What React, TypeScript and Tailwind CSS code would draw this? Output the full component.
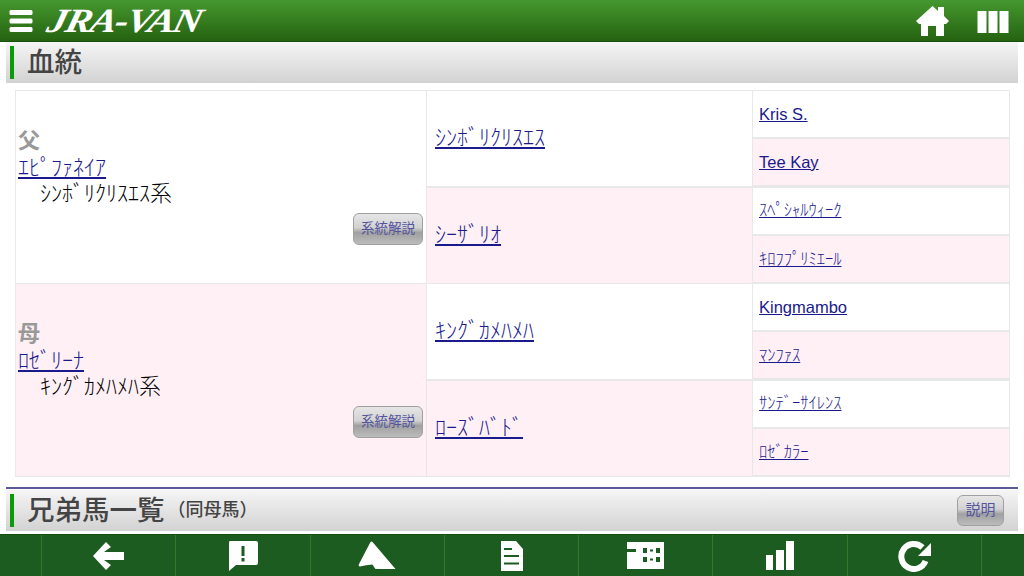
import React from "react";

const pink = "bg-[#fff0f5]";
const jp = "font-['Liberation_Sans','Noto_Sans_CJK_JP',sans-serif]";
const btnBg = "bg-[linear-gradient(#e6e6e6_0%,#d2d2d2_45%,#a0a0a0_62%,#bcbcbc_100%)]";
const footerGreen = "#1d5c20";

const Ancestor = ({ name, kana, bg }: { name: string; kana?: boolean; bg: string }) => (
	<div className={`h-[46px] flex items-center pl-[6px] ${bg}`}>
		<a className={`text-[#1a1a8c] underline text-[16.5px] ${kana ? "font-light" : ""}`}>{name}</a>
	</div>
);

const SystemButton = ({ label }: { label: string }) => (
	<div className={`absolute right-[3px] bottom-[38px] w-[70px] h-[32px] rounded-[6px] border border-[#a0a0a0] ${btnBg} flex items-center justify-center text-[13.5px] text-[#55559f]`}>
		{label}
	</div>
);

const Parent = ({ role, name, line, bg }: { role: string; name: string; line: string; bg: string }) => (
	<div className={`relative row-span-4 ${bg} pl-[2px] pt-[36px]`}>
		<div className="text-[22px] leading-[27px] font-bold text-[#999]">{role}</div>
		<a className="block text-[22px] leading-[27px] font-light text-[#1a1a8c] underline">{name}</a>
		<div className="pl-[22px] text-[22px] leading-[26px] font-light text-black">{line}</div>
		<SystemButton label="系統解説" />
	</div>
);

const Mid = ({ name, bg }: { name: string; bg: string }) => (
	<div className={`row-span-2 flex items-center pl-[8px] pb-[2px] ${bg}`}>
		<a className="text-[22px] font-light text-[#1a1a8c] underline">{name}</a>
	</div>
);

const SectionBar = ({ children }: { children: React.ReactNode }) => (
	<div className="relative h-[41px] mx-[6px] flex items-center bg-[linear-gradient(#f5f5f5,#d2d2d2)]">
		<div className="ml-[4px] w-[4px] h-[33px] bg-[#0a9a0a]" />
		{children}
	</div>
);

const FooterCell = ({ children }: { children: React.ReactNode }) => (
	<div className="w-[134.3px] h-full border-r border-[#2f7a2a] flex items-center justify-center">{children}</div>
);

export default function App() {
	return (
		<div className={`w-[1024px] h-[576px] overflow-hidden bg-white flex flex-col ${jp}`}>
			{/* header */}
			<div className="h-[42px] shrink-0 border-b border-[#14500e] bg-[linear-gradient(#45982f,#256210)] flex items-center">
				<svg width="24" height="24" viewBox="0 0 24 24" className="ml-[9px] mt-[1px]">
					<rect x="0.5" y="1" width="23" height="5" rx="1.5" fill="#fff" />
					<rect x="0.5" y="9.5" width="23" height="5" rx="1.5" fill="#fff" />
					<rect x="0.5" y="18" width="23" height="5" rx="1.5" fill="#fff" />
				</svg>
				<span className="ml-[15px] text-[34px] leading-none font-bold italic text-white font-['Liberation_Serif',serif] tracking-[-1.5px] scale-x-[1.17] skew-x-[-12deg] origin-left">
					JRA-VAN
				</span>
				<div className="ml-auto flex items-center">
					<svg width="33" height="30" viewBox="0 0 33 30" className="mr-[28px] mt-[1px]">
						<path
							fill="#fff"
							d="M16.5 0 L22 5 V1 H28 V10 L33 15 L30 18 H28 V30 H20 V20 H12 V30 H5 V18 H3 L0 15 Z"
						/>
					</svg>
					<svg width="32" height="22" viewBox="0 0 32 22" className="mr-[15px] mt-[3px]">
						<rect x="0.5" y="0" width="9" height="22" fill="#fff" />
						<rect x="11.5" y="0" width="9" height="22" fill="#fff" />
						<rect x="22.5" y="0" width="9" height="22" fill="#fff" />
					</svg>
				</div>
			</div>

			{/* 血統 */}
			<SectionBar>
				<span className="ml-[13px] text-[27.5px] font-medium text-[#444]">血統</span>
			</SectionBar>

			{/* pedigree table */}
			<div className="mt-[7px] ml-[15px] w-[995px] h-[387px] bg-[#e8e8e8] p-px grid grid-cols-[410px_325px_1fr] grid-rows-[repeat(8,47px)] gap-[1px] gap-y-[1.3px]">
				<Parent role="父" name="ｴﾋﾟﾌｧﾈｲｱ" line="ｼﾝﾎﾞﾘｸﾘｽｴｽ系" bg="bg-white" />
				<Mid name="ｼﾝﾎﾞﾘｸﾘｽｴｽ" bg="bg-white" />
				<Ancestor name="Kris S." bg="bg-white" />
				<Ancestor name="Tee Kay" bg={pink} />
				<Mid name="ｼｰｻﾞﾘｵ" bg={pink} />
				<Ancestor name="ｽﾍﾟｼｬﾙｳｨｰｸ" kana bg="bg-white" />
				<Ancestor name="ｷﾛﾌﾌﾟﾘﾐｴｰﾙ" kana bg={pink} />
				<Parent role="母" name="ﾛｾﾞﾘｰﾅ" line="ｷﾝｸﾞｶﾒﾊﾒﾊ系" bg={pink} />
				<Mid name="ｷﾝｸﾞｶﾒﾊﾒﾊ" bg="bg-white" />
				<Ancestor name="Kingmambo" bg="bg-white" />
				<Ancestor name="ﾏﾝﾌｧｽ" kana bg={pink} />
				<Mid name="ﾛｰｽﾞﾊﾞﾄﾞ" bg={pink} />
				<Ancestor name="ｻﾝﾃﾞｰｻｲﾚﾝｽ" kana bg="bg-white" />
				<Ancestor name="ﾛｾﾞｶﾗｰ" kana bg={pink} />
			</div>

			<div className="mt-[10px] mx-[6px] h-[2px] bg-[#5a5a9a]" />
			<div className="mt-px">
				<SectionBar>
					<span className="ml-[13px] text-[27.5px] font-medium text-[#444]">兄弟馬一覧</span>
					<span className="ml-[3px] text-[18px] font-medium text-[#444]">（同母馬）</span>
					<div className={`ml-auto mr-[14px] w-[47px] h-[31px] rounded-[6px] border border-[#a0a0a0] ${btnBg} flex items-center justify-center text-[15px] text-[#55559f]`}>
						説明
					</div>
				</SectionBar>
			</div>

			{/* footer */}
			<div className="mt-[3px] flex-1 border-t border-[#14500e] bg-[#1d5c20] flex">
				<div className="w-[42px] h-full border-r border-[#2f7a2a]" />
				<FooterCell>
					<svg width="32" height="30" viewBox="0 0 32 30">
						<path fill="#fff" d="M13 1 L18 6 L11 11 H31 V19 H11 L18 24 L13 29 L0 15 Z" />
					</svg>
				</FooterCell>
				<FooterCell>
					<svg width="32" height="32" viewBox="0 0 32 32">
						<path fill="#fff" d="M3 1 H29 Q31 1 31 3 V23 Q31 25 29 25 H9 L2 31 V3 Q2 1 3 1 Z" />
						<rect x="14.5" y="6" width="3" height="10" fill={footerGreen} />
						<rect x="14.5" y="18" width="3" height="3.5" fill={footerGreen} />
					</svg>
				</FooterCell>
				<FooterCell>
					<svg width="38" height="29" viewBox="0 0 38 29">
						<path fill="#fff" d="M12.5 1 Q13.5 0 14.5 1 L37.5 28 H17.5 L14.3 23.5 Q8 24 2 25.5 Q0 25.5 1 23 Z" />
					</svg>
				</FooterCell>
				<FooterCell>
					<svg width="24" height="30" viewBox="0 0 24 30">
						<path fill="#fff" d="M1 0 H16 L23 8 V30 H1 Z" />
						<rect x="4" y="7" width="8" height="2" fill={footerGreen} />
						<rect x="4" y="14" width="15" height="2" fill={footerGreen} />
						<rect x="4" y="21.5" width="15" height="2" fill={footerGreen} />
					</svg>
				</FooterCell>
				<FooterCell>
					<svg width="37" height="27" viewBox="0 0 37 27">
						<path fill="#fff" d="M0 0 H37 V27 H0 Z" />
						<rect x="0" y="7" width="9" height="3" fill={footerGreen} />
						<rect x="16" y="6" width="4" height="5" fill={footerGreen} />
						<rect x="23" y="7.5" width="3" height="2" fill={footerGreen} />
						<rect x="29" y="6" width="4" height="5" fill={footerGreen} />
						<rect x="16" y="15" width="4" height="5" fill={footerGreen} />
						<rect x="23" y="16.5" width="3" height="2" fill={footerGreen} />
						<rect x="29" y="15" width="4" height="5" fill={footerGreen} />
					</svg>
				</FooterCell>
				<FooterCell>
					<svg width="28" height="29" viewBox="0 0 28 29">
						<rect x="0" y="14" width="7" height="15" fill="#fff" />
						<rect x="10" y="9" width="8" height="20" fill="#fff" />
						<rect x="20" y="0" width="8" height="29" fill="#fff" />
					</svg>
				</FooterCell>
				<FooterCell>
					<svg width="33" height="32" viewBox="0 0 33 32">
						<path fill="none" stroke="#fff" strokeWidth="6" d="M27.5 21 A12.5 12.5 0 1 1 24.5 7.5" />
						<path fill="#fff" d="M33 3 V16 H20 Z" />
					</svg>
				</FooterCell>
				<div className="flex-1" />
			</div>
		</div>
	);
}
